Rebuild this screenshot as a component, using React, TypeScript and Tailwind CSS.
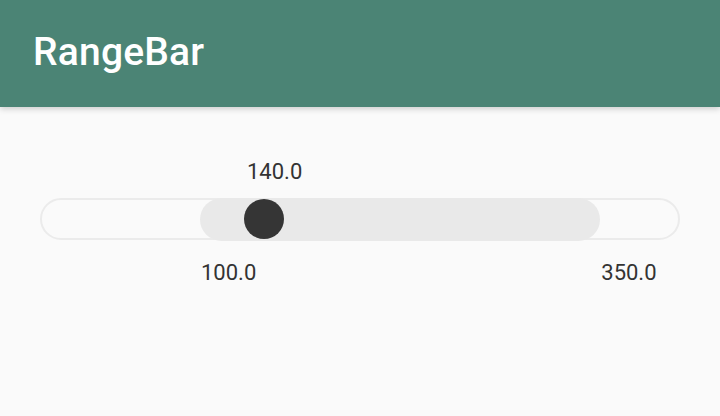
import React from 'react';

const min = 0;
const max = 400;
const low = 100;
const high = 350;
const value = 140;

const trackWidth = 640;
const px = (v: number) => ((v - min) / (max - min)) * trackWidth;

export default function App() {
  return (
    <div className="w-[720px] h-[416px] bg-[#fafafa] overflow-hidden flex flex-col font-['Roboto','Liberation_Sans',sans-serif]">
      {/* App bar */}
      <header className="relative z-10 h-[107px] shrink-0 bg-[#4b8475] flex items-center px-[33px] shadow-[0_2px_6px_rgba(0,0,0,0.18)]">
        <h1 className="text-white text-[39px] font-medium tracking-[0.2px] leading-none mt-[-2px]">RangeBar</h1>
      </header>

      {/* Range bar */}
      <div className="pt-[54px] px-[40px] flex flex-col w-[720px]">
        {/* current value label */}
        <div className="h-[37px] text-[22px] leading-none text-[#333333]" style={{ paddingLeft: px(value) - 17 }}>
          {value.toFixed(1)}
        </div>

        {/* track */}
        <div className="relative h-[42px] w-[640px] rounded-full border-2 border-[#ebebeb] bg-[#fafafa]">
          <div
            className="absolute top-[-2px] h-[43px] rounded-full bg-[#e9e9e9]"
            style={{ left: px(low) - 2, width: px(high) - px(low) }}
          />
          <div
            className="absolute top-[-1px] w-[40px] h-[40px] rounded-full bg-[#353535]"
            style={{ left: px(value) - 22 }}
          />
        </div>

        {/* bounds */}
        <div className="flex pt-[22px] text-[22px] leading-none text-[#333333]" style={{ paddingLeft: px(low) + 1 }}>
          <span>{low.toFixed(1)}</span>
          <span style={{ marginLeft: px(high) - px(low) - 55 }}>{high.toFixed(1)}</span>
        </div>
      </div>
    </div>
  );
}
